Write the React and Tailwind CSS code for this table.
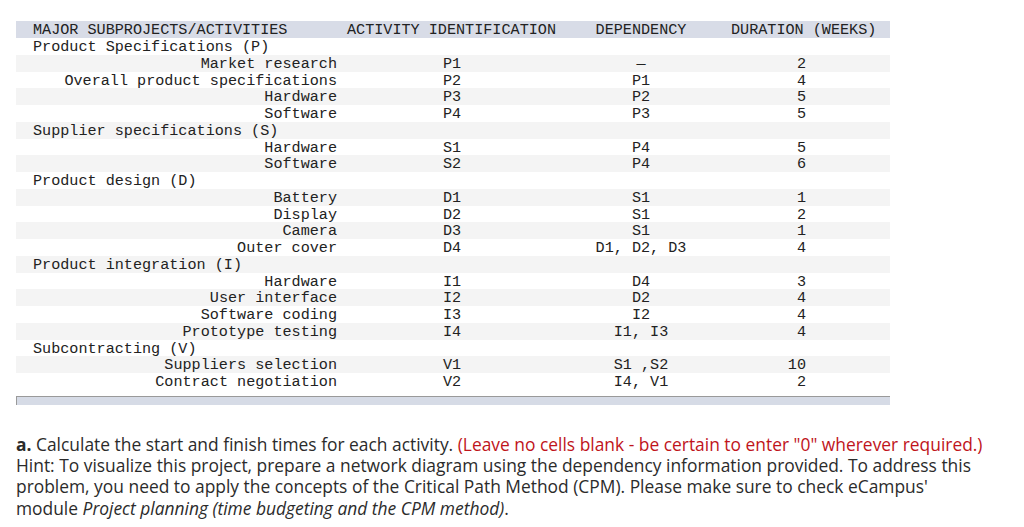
import React from "react";

const rows = [
  { group: "Product Specifications (P)" },
  { name: "Market research", id: "P1", dep: "—", dur: "2" },
  { name: "Overall product specifications", id: "P2", dep: "P1", dur: "4" },
  { name: "Hardware", id: "P3", dep: "P2", dur: "5" },
  { name: "Software", id: "P4", dep: "P3", dur: "5" },
  { group: "Supplier specifications (S)" },
  { name: "Hardware", id: "S1", dep: "P4", dur: "5" },
  { name: "Software", id: "S2", dep: "P4", dur: "6" },
  { group: "Product design (D)" },
  { name: "Battery", id: "D1", dep: "S1", dur: "1" },
  { name: "Display", id: "D2", dep: "S1", dur: "2" },
  { name: "Camera", id: "D3", dep: "S1", dur: "1" },
  { name: "Outer cover", id: "D4", dep: "D1, D2, D3", dur: "4" },
  { group: "Product integration (I)" },
  { name: "Hardware", id: "I1", dep: "D4", dur: "3" },
  { name: "User interface", id: "I2", dep: "D2", dur: "4" },
  { name: "Software coding", id: "I3", dep: "I2", dur: "4" },
  { name: "Prototype testing", id: "I4", dep: "I1, I3", dur: "4" },
  { group: "Subcontracting (V)" },
  { name: "Suppliers selection", id: "V1", dep: "S1 ,S2", dur: "10" },
  { name: "Contract negotiation", id: "V2", dep: "I4, V1", dur: "2" },
];

const App = () => {
  return (
    <div className="bg-white w-[1024px] h-[527px] overflow-hidden">
      <div className="pt-[21px] pl-4">
        <div
          className="w-[874px] text-[15.15px] text-[#222] whitespace-pre"
          style={{ fontFamily: '"Liberation Mono", "Courier New", monospace' }}
        >
          <div className="flex h-[17px] leading-[18px] bg-[#d8dce7]">
            <div className="w-[324px] pl-[17px]">MAJOR SUBPROJECTS/ACTIVITIES</div>
            <div className="w-[250px] pl-[7px]">ACTIVITY IDENTIFICATION</div>
            <div className="w-[102px] text-center">DEPENDENCY</div>
            <div className="flex-1 pl-[39px]">DURATION (WEEKS)</div>
          </div>
          {rows.map((r, i) => (
            <div
              key={i}
              className={`flex h-[16.76px] leading-[19px] ${i % 2 === 1 ? "bg-[#f4f4f4]" : "bg-white"}`}
            >
              {r.group ? (
                <div className="w-[324px] pl-[17px]">{r.group}</div>
              ) : (
                <>
                  <div className="w-[324px] pr-[3px] text-right">{r.name}</div>
                  <div className="w-[250px] pl-[103px]">{r.id}</div>
                  <div className="w-[102px] text-center">{r.dep}</div>
                  <div className="w-[114px] text-right">{r.dur}</div>
                </>
              )}
            </div>
          ))}
        </div>
        <div className="w-[874px] h-[9px] mt-[6px] bg-[#d6dbe6] border-t border-l border-[#9a9a9a]" />
      </div>

      <div
        className="mt-[29px] pl-4 text-[17.4px] leading-[21.3px] text-[#2b2b2b] whitespace-nowrap"
        style={{ fontFamily: "'Open Sans', Lato, sans-serif" }}
      >
        <div>
          <b>a.</b> Calculate the start and finish times for each activity.{" "}
          <span className="text-[#c0141b]">
            (Leave no cells blank - be certain to enter "0" wherever required.)
          </span>
        </div>
        <div>
          Hint: To visualize this project, prepare a network diagram using the dependency
          information provided. To address this
        </div>
        <div>
          problem, you need to apply the concepts of the Critical Path Method (CPM). Please make
          sure to check eCampus'
        </div>
        <div>
          module <i>Project planning (time budgeting and the CPM method)</i>.
        </div>
      </div>
    </div>
  );
};

export default App;
